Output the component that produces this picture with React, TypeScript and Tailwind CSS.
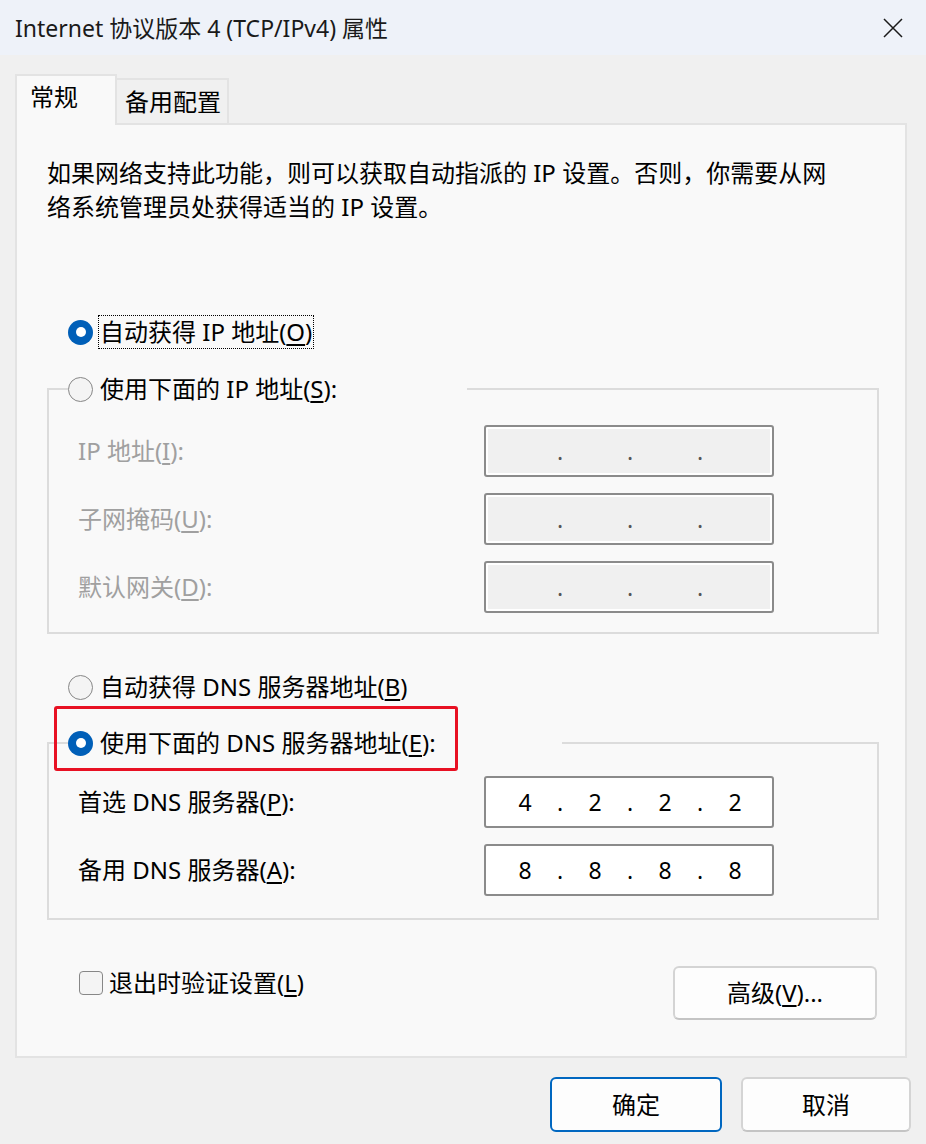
import React from "react";

function Radio({ checked }: { checked?: boolean }) {
  if (checked) {
    return (
      <span className="flex h-[25px] w-[25px] shrink-0 items-center justify-center rounded-full bg-[#005fb8]">
        <span className="h-[10px] w-[10px] rounded-full bg-white" />
      </span>
    );
  }
  return (
    <span className="h-[25px] w-[25px] shrink-0 rounded-full border-[1.5px] border-[#878787] bg-[#f4f4f4]" />
  );
}

function IpBox({ values, disabled }: { values: string[]; disabled?: boolean }) {
  return (
    <div
      className={
        disabled
          ? "flex h-[52px] w-[290px] items-center rounded-[3px] border-2 border-[#8b8b8b] bg-[#f0f0f0] pl-[7px] text-[23px] leading-none text-[#555] shadow-[inset_0_0_0_2px_#ffffff]"
          : "flex h-[52px] w-[290px] items-center rounded-[3px] border-2 border-[#8b8b8b] bg-white pl-[7px] text-[23px] leading-none text-black"
      }
    >
      {values.map((v, i) => (
        <React.Fragment key={i}>
          {i > 0 && <span className="w-[6px] text-center">.</span>}
          <span className="w-[64px] text-center">{v}</span>
        </React.Fragment>
      ))}
    </div>
  );
}

function FieldRow({
  label,
  keyChar,
  rest,
  values,
  disabled,
}: {
  label: string;
  keyChar: string;
  rest: string;
  values: string[];
  disabled?: boolean;
}) {
  return (
    <div className="flex items-center pl-[29px]">
      <div className={disabled ? "w-[406px] text-[#a0a0a0]" : "w-[406px] text-black"}>
        {label}(<u className="underline-offset-[3px]">{keyChar}</u>){rest}
      </div>
      <IpBox values={values} disabled={disabled} />
    </div>
  );
}

export default function App() {
  const emptyIp = ["", "", "", ""];

  return (
    <div className="flex h-[1144px] w-[926px] flex-col overflow-hidden bg-[#f0f0f0] font-['Noto_Sans','Noto_Sans_CJK_SC',sans-serif] text-[24px] leading-[34px] text-black">
      {/* Title bar */}
      <div className="flex h-[55px] shrink-0 items-center justify-between bg-[#eef2f9] pl-[15px] pr-[23px]">
        <div className="text-[23px] text-[#1a1a1a]">Internet 协议版本 4 (TCP/IPv4) 属性</div>
        <svg width="20" height="20" viewBox="0 0 20 20">
          <path d="M1 1 L19 19 M19 1 L1 19" stroke="#1a1a1a" strokeWidth="1.5" />
        </svg>
      </div>

      {/* Tabs */}
      <div className="mt-[19px] flex items-end pl-[15px]">
        <div className="relative z-10 -mb-[2px] h-[51px] w-[102px] border-2 border-b-0 border-[#e3e3e3] bg-[#f9f9f9] pl-[13px] pt-[4px]">
          常规
        </div>
        <div className="h-[45px] w-[112px] border-2 border-b-0 border-l-0 border-[#e3e3e3] bg-[#f0f0f0] pl-[8px] pt-[5px]">
          备用配置
        </div>
      </div>

      {/* Panel */}
      <div className="ml-[15px] flex w-[892px] flex-col border-2 border-[#e3e3e3] bg-[#f9f9f9] pb-[36px] pl-[30px] pr-[26px] pt-[31px]">
        <p>
          如果网络支持此功能，则可以获取自动指派的 IP 设置。否则，你需要从网
          <br />
          络系统管理员处获得适当的 IP 设置。
        </p>

        {/* Auto IP */}
        <div className="mt-[91px] flex h-[34px] items-center pl-[21px]">
          <Radio checked />
          <span className="ml-[5px] border border-dotted border-black px-[1px] leading-[32px]">
            自动获得 IP 地址(<u className="underline-offset-[3px]">O</u>)
          </span>
        </div>

        {/* Manual IP group */}
        <fieldset className="mt-[23px] border-2 border-[#dcdcdc] pb-[19px]">
          <legend className="ml-[19px] w-[399px]">
            <div className="flex h-[34px] items-center gap-[7px]">
              <Radio />
              <span>
                使用下面的 IP 地址(<u className="underline-offset-[3px]">S</u>):
              </span>
            </div>
          </legend>
          <div className="flex flex-col gap-[16px] pt-[19px]">
            <FieldRow label="IP 地址" keyChar="I" rest=":" values={emptyIp} disabled />
            <FieldRow label="子网掩码" keyChar="U" rest=":" values={emptyIp} disabled />
            <FieldRow label="默认网关" keyChar="D" rest=":" values={emptyIp} disabled />
          </div>
        </fieldset>

        {/* Auto DNS */}
        <div className="mt-[36px] flex h-[34px] items-center gap-[7px] pl-[21px]">
          <Radio />
          <span>
            自动获得 DNS 服务器地址(<u className="underline-offset-[3px]">B</u>)
          </span>
        </div>

        {/* Manual DNS group */}
        <fieldset className="mt-[22px] border-2 border-[#dcdcdc] pb-[22px]">
          <legend className="relative ml-[19px] w-[494px]">
            <div className="flex h-[34px] items-center gap-[7px]">
              <Radio checked />
              <span>
                使用下面的 DNS 服务器地址(<u className="underline-offset-[3px]">E</u>):
              </span>
            </div>
            <div className="absolute -left-[14px] -top-[20px] h-[65px] w-[404px] rounded-[3px] border-[3px] border-[#e81123]" />
          </legend>
          <div className="flex flex-col gap-[16px] pt-[16px]">
            <FieldRow label="首选 DNS 服务器" keyChar="P" rest=":" values={["4", "2", "2", "2"]} />
            <FieldRow label="备用 DNS 服务器" keyChar="A" rest=":" values={["8", "8", "8", "8"]} />
          </div>
        </fieldset>

        {/* Validate + advanced */}
        <div className="mt-[46px] flex items-start justify-between">
          <label className="flex h-[34px] items-center gap-[6px] pl-[32px]">
            <span className="h-[24px] w-[24px] rounded-[4px] border-[1.5px] border-[#878787] bg-[#f4f4f4]" />
            <span>
              退出时验证设置(<u className="underline-offset-[3px]">L</u>)
            </span>
          </label>
          <button className="mr-[2px] h-[54px] w-[204px] rounded-[6px] border-2 border-[#d4d4d4] border-b-[#c4c4c4] bg-[#fdfdfd]">
            高级(<u className="underline-offset-[3px]">V</u>)...
          </button>
        </div>
      </div>

      {/* Dialog buttons */}
      <div className="mt-[19px] flex justify-end gap-[19px] pr-[15px]">
        <button className="h-[55px] w-[172px] rounded-[6px] border-2 border-[#0067c0] bg-[#fdfdfd]">确定</button>
        <button className="h-[55px] w-[170px] rounded-[6px] border-2 border-[#d4d4d4] border-b-[#c4c4c4] bg-[#fdfdfd]">
          取消
        </button>
      </div>
    </div>
  );
}
